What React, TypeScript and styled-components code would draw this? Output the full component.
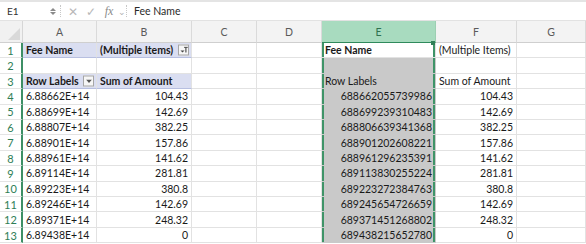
import React from 'react';
import styled, { createGlobalStyle, css } from 'styled-components';

const GlobalStyle = createGlobalStyle`
  body {
    margin: 0;
    background: #ffffff;
    font-family: Lato, 'Open Sans', Arial, sans-serif;
  }
`;

const Frame = styled.div`
  width: 586px;
  height: 244px;
  overflow: hidden;
  background: #ffffff;
`;

const FormulaBar = styled.div`
  display: flex;
  align-items: center;
  height: 21px;
  border-top: 2px solid #e4e4e4;
  border-bottom: 1px solid #e2e2e2;
  box-sizing: border-box;
  font-size: 10px;
  color: #333;
`;

const NameBox = styled.div`
  width: 43px;
  padding-left: 7px;
`;

const Spinner = styled.div`
  display: flex;
  flex-direction: column;
  gap: 1px;
  width: 8px;
`;

const FormulaIcon = styled.span<{ $italic?: boolean }>`
  width: 18px;
  text-align: center;
  color: #b8b8b8;
  font-size: 12px;
  ${(p) =>
    p.$italic &&
    css`
      font-family: 'Liberation Serif', serif;
      font-style: italic;
      color: #8a8a8a;
    `}
`;

const Divider = styled.span`
  width: 1px;
  height: 12px;
  margin: 0 2px;
  border-left: 1px dotted #c8c8c8;
`;

const Caret = styled.span`
  color: #b0b0b0;
  font-size: 9px;
  width: 6px;
`;

const FormulaText = styled.span`
  margin-left: 4px;
  font-size: 10.5px;
  color: #2a2a2a;
`;

const Sheet = styled.div`
  display: grid;
  grid-template-columns: 23px 74px 95px 65px 65px 114px 81px 69px;
  grid-template-rows: 22px repeat(13, 15.42px);
  font-size: 10.5px;
  color: #1a1a1a;
`;

const Corner = styled.div`
  background: #f1f1f1;
  border-right: 1px solid #d6d6d6;
  border-bottom: 1px solid #d0d0d0;
  display: flex;
  align-items: flex-end;
  justify-content: flex-end;
  padding: 0 2px 2px 0;
`;

const ColHead = styled.div<{ $active?: boolean }>`
  display: flex;
  align-items: center;
  justify-content: center;
  background: ${(p) => (p.$active ? '#a8dbbf' : '#f3f3f3')};
  color: ${(p) => (p.$active ? '#2f7150' : '#5a5a5a')};
  border-right: 1px solid ${(p) => (p.$active ? '#9ccfb2' : '#dadada')};
  border-bottom: 1px solid ${(p) => (p.$active ? '#2f8a5c' : '#cfcfcf')};
  font-size: 10.5px;
`;

const RowHead = styled.div`
  display: flex;
  align-items: center;
  justify-content: center;
  background: #ffffff;
  color: #2e7e56;
  border-right: 2px solid #3d8f65;
  border-bottom: 1px solid #e4e4e4;
  font-size: 11px;
  box-sizing: border-box;
`;

type Tone = 'plain' | 'pivot' | 'grey' | 'active';

const Cell = styled.div<{ $tone?: Tone; $right?: boolean; $bold?: boolean; $sel?: boolean }>`
  position: relative;
  display: flex;
  align-items: center;
  justify-content: ${(p) => (p.$right ? 'flex-end' : 'flex-start')};
  padding: 0 3px 0 3px;
  min-width: 0;
  white-space: nowrap;
  font-weight: ${(p) => (p.$bold ? 700 : 400)};
  background: ${(p) =>
    p.$tone === 'pivot' ? '#dadef1' : p.$tone === 'grey' ? '#c9c9c9' : '#ffffff'};
  border-right: 1px solid ${(p) => (p.$tone === 'grey' ? '#c9c9c9' : '#e2e2e2')};
  border-bottom: 1px solid
    ${(p) => (p.$tone === 'pivot' ? '#b7bfe0' : p.$tone === 'grey' ? '#c9c9c9' : '#e2e2e2')};
  ${(p) =>
    p.$sel &&
    css`
      box-shadow: inset 2px 0 0 #3f9468, inset -2px 0 0 #3f9468;
    `}
`;

const FillHandle = styled.span`
  position: absolute;
  right: 0;
  top: -2px;
  width: 4px;
  height: 4px;
  background: #2f7f57;
`;

const PivotButton = styled.span`
  position: absolute;
  right: 2px;
  top: 50%;
  transform: translateY(-50%);
  width: 11px;
  height: 11px;
  box-sizing: border-box;
  border: 1px solid #a6a6a6;
  background: #f6f6f6;
  display: flex;
  align-items: center;
  justify-content: center;
`;

const rows: [string, string, string, string][] = [
  ['6.88662E+14', '104.43', '688662055739986', '104.43'],
  ['6.88699E+14', '142.69', '688699239310483', '142.69'],
  ['6.88807E+14', '382.25', '688806639341368', '382.25'],
  ['6.88901E+14', '157.86', '688901202608221', '157.86'],
  ['6.88961E+14', '141.62', '688961296235391', '141.62'],
  ['6.89114E+14', '281.81', '689113830255224', '281.81'],
  ['6.89223E+14', '380.8', '689223272384763', '380.8'],
  ['6.89246E+14', '142.69', '689245654726659', '142.69'],
  ['6.89371E+14', '248.32', '689371451268802', '248.32'],
  ['6.89438E+14', '0', '689438215652780', '0'],
];

const columns = ['A', 'B', 'C', 'D', 'E', 'F', 'G'];

const FilterIcon = () => (
  <svg width="8" height="7" viewBox="0 0 8 7">
    <path d="M0.5 4 L2.5 6 L4.5 4 Z" fill="#444" />
    <path d="M4 0.8 H7.8 M5.9 0.8 V6" stroke="#444" strokeWidth="1.1" fill="none" />
  </svg>
);

const DropIcon = () => (
  <svg width="6" height="4" viewBox="0 0 6 4">
    <path d="M0 0 H6 L3 3.5 Z" fill="#555" />
  </svg>
);

const App: React.FC = () => (
  <React.Fragment>
    <GlobalStyle />
    <Frame>
      <FormulaBar>
        <NameBox>E1</NameBox>
        <Spinner>
          <svg width="6" height="3" viewBox="0 0 6 3">
            <path d="M0 3 L3 0 L6 3 Z" fill="#8a8a8a" />
          </svg>
          <svg width="6" height="3" viewBox="0 0 6 3">
            <path d="M0 0 L3 3 L6 0 Z" fill="#8a8a8a" />
          </svg>
        </Spinner>
        <Divider />
        <FormulaIcon>✕</FormulaIcon>
        <FormulaIcon>✓</FormulaIcon>
        <FormulaIcon $italic>fx</FormulaIcon>
        <Caret>⌄</Caret>
        <Divider />
        <FormulaText>Fee Name</FormulaText>
      </FormulaBar>
      <Sheet>
        <Corner>
          <svg width="12" height="12" viewBox="0 0 12 12">
            <path d="M12 0 V12 H0 Z" fill="#d9d9d9" />
          </svg>
        </Corner>
        {columns.map((c) => (
          <ColHead key={c} $active={c === 'E'}>
            {c}
          </ColHead>
        ))}

        <RowHead>1</RowHead>
        <Cell $tone="pivot" $bold>
          Fee Name
        </Cell>
        <Cell $tone="pivot" $bold>
          (Multiple Items)
          <PivotButton>
            <FilterIcon />
          </PivotButton>
        </Cell>
        <Cell />
        <Cell />
        <Cell $tone="active" $sel $bold>
          Fee Name
          <FillHandle />
        </Cell>
        <Cell>(Multiple Items)</Cell>
        <Cell />

        <RowHead>2</RowHead>
        <Cell />
        <Cell />
        <Cell />
        <Cell />
        <Cell $tone="grey" $sel />
        <Cell />
        <Cell />

        <RowHead>3</RowHead>
        <Cell $tone="pivot" $bold>
          Row Labels
          <PivotButton>
            <DropIcon />
          </PivotButton>
        </Cell>
        <Cell $tone="pivot" $bold>
          Sum of Amount
        </Cell>
        <Cell />
        <Cell />
        <Cell $tone="grey" $sel>
          Row Labels
        </Cell>
        <Cell>Sum of Amount</Cell>
        <Cell />

        {rows.map(([label, sum, full, amount], i) => (
          <React.Fragment key={full}>
            <RowHead>{i + 4}</RowHead>
            <Cell>{label}</Cell>
            <Cell $right>{sum}</Cell>
            <Cell />
            <Cell />
            <Cell $tone="grey" $sel $right>
              {full}
            </Cell>
            <Cell $right>{amount}</Cell>
            <Cell />
          </React.Fragment>
        ))}
      </Sheet>
    </Frame>
  </React.Fragment>
);

export default App;
